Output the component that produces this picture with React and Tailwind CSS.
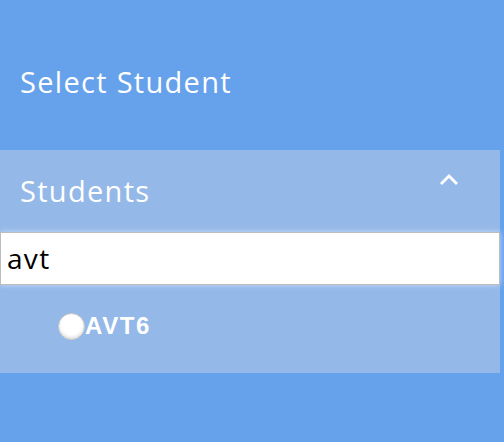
import React, { useState } from "react";

const ChevronUp = () => (
  <svg width="18" height="12" viewBox="0 0 18 12" fill="none">
    <path d="M2 10 L9 3 L16 10" stroke="white" strokeWidth="2.8" strokeLinecap="square" />
  </svg>
);

const App = () => {
  const [query, setQuery] = useState("avt");
  const [open] = useState(true);

  return (
    <div className="w-[504px] h-[442px] bg-[#66a1eb] overflow-hidden" style={{ fontFamily: "'Open Sans', sans-serif" }}>
      <div className="h-[150px] flex items-center pl-[20px] pt-[14px]">
        <h1 className="text-[29px] text-white font-normal tracking-[1.3px]">Select Student</h1>
      </div>

      <div className="w-[500px] bg-[#94b8e8] h-[223px]">
        <div className="h-[82px] flex items-center justify-between pl-[20px] pr-[42px]">
          <h2 className="text-[29px] text-white tracking-[1.3px] -mt-[1px]">Students</h2>
          <div className="-mt-[24px]">
            <ChevronUp />
          </div>
        </div>

        {open && (
          <>
            <input
              value={query}
              onChange={(e) => setQuery(e.target.value)}
              className="block w-[500px] h-[53px] bg-white border border-[#bdbdbd] px-[6px] pb-[2px] text-[28px] text-black outline-none tracking-[1.3px] shadow-[0_0_6px_rgba(205,225,252,0.9)]"
            />
            <div className="h-[88px] flex items-center pl-[58px] pb-[6px]">
              <span className="w-[27px] h-[27px] rounded-full bg-white border border-[#c4c4c4] shadow-[inset_0_-2px_3px_rgba(0,0,0,0.12)]" />
              <span className="text-white font-bold text-[24px] leading-none tracking-[1.6px]" style={{ fontFamily: "'Liberation Sans', Arial, sans-serif" }}>
                AVT6
              </span>
            </div>
          </>
        )}
      </div>
    </div>
  );
};

export default App;
